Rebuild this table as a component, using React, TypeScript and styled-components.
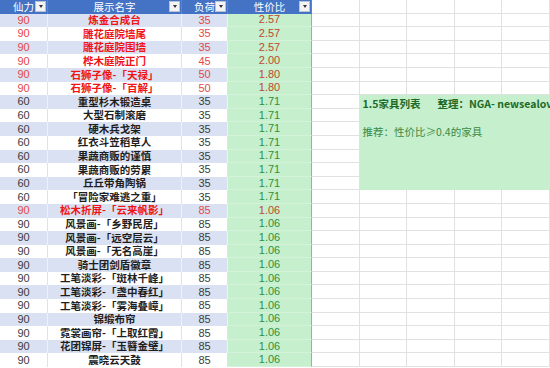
import styled, { createGlobalStyle } from "styled-components";

const GlobalStyle = createGlobalStyle`
  html, body {
    margin: 0;
    padding: 0;
    background: #ffffff;
    overflow: hidden;
  }
`;

type Item = {
  power: number;
  name: string;
  load: number;
  ratio: string;
  hot?: boolean;
};

const items: Item[] = [
  { power: 90, name: "炼金合成台", load: 35, ratio: "2.57", hot: true },
  { power: 90, name: "雕花庭院墙尾", load: 35, ratio: "2.57", hot: true },
  { power: 90, name: "雕花庭院围墙", load: 35, ratio: "2.57", hot: true },
  { power: 90, name: "桦木庭院正门", load: 45, ratio: "2.00", hot: true },
  { power: 90, name: "石狮子像-「天禄」", load: 50, ratio: "1.80", hot: true },
  { power: 90, name: "石狮子像-「百解」", load: 50, ratio: "1.80", hot: true },
  { power: 60, name: "重型杉木锻造桌", load: 35, ratio: "1.71" },
  { power: 60, name: "大型石制滚磨", load: 35, ratio: "1.71" },
  { power: 60, name: "硬木兵戈架", load: 35, ratio: "1.71" },
  { power: 60, name: "红衣斗笠稻草人", load: 35, ratio: "1.71" },
  { power: 60, name: "果蔬商贩的谨慎", load: 35, ratio: "1.71" },
  { power: 60, name: "果蔬商贩的劳累", load: 35, ratio: "1.71" },
  { power: 60, name: "丘丘带角陶锅", load: 35, ratio: "1.71" },
  { power: 60, name: "「冒险家难逃之重」", load: 35, ratio: "1.71" },
  { power: 90, name: "松木折屏-「云来帆影」", load: 85, ratio: "1.06", hot: true },
  { power: 90, name: "风景画-「乡野民居」", load: 85, ratio: "1.06" },
  { power: 90, name: "风景画-「远空层云」", load: 85, ratio: "1.06" },
  { power: 90, name: "风景画-「无名高崖」", load: 85, ratio: "1.06" },
  { power: 90, name: "骑士团剑盾徽章", load: 85, ratio: "1.06" },
  { power: 90, name: "工笔淡彩-「斑林千峰」", load: 85, ratio: "1.06" },
  { power: 90, name: "工笔淡彩-「盏中春红」", load: 85, ratio: "1.06" },
  { power: 90, name: "工笔淡彩-「雾海叠嶂」", load: 85, ratio: "1.06" },
  { power: 90, name: "锦缎布帘", load: 85, ratio: "1.06" },
  { power: 90, name: "霓裳画帘-「上取红霞」", load: 85, ratio: "1.06" },
  { power: 90, name: "花团锦屏-「玉簪金璧」", load: 85, ratio: "1.06" },
  { power: 90, name: "震晓云天鼓", load: 85, ratio: "1.06" },
];

const ROW = "13.6px";
const ROWS = items.length + 1;

const Sheet = styled.div`
  display: flex;
  width: 550px;
  height: 368px;
  overflow: hidden;
  font-family: "Liberation Sans", "Noto Sans CJK SC", sans-serif;
  font-size: 10.5px;
`;

const Table = styled.div`
  display: grid;
  grid-template-columns: 48px 134px 46px 84px;
  grid-auto-rows: ${ROW};
  flex: none;
`;

const HeadCell = styled.div`
  position: relative;
  display: flex;
  align-items: center;
  justify-content: center;
  background: #4472c4;
  color: #ffffff;
  font-family: "Noto Sans CJK SC", sans-serif;
  font-size: 10.5px;
  line-height: 1;
  border-right: 1px solid #5b84cc;
  box-sizing: border-box;
`;

const Filter = styled.span`
  position: absolute;
  right: 1px;
  top: 1px;
  width: 11px;
  height: 11px;
  box-sizing: border-box;
  background: #f4f4f4;
  border: 1px solid #b9c3d3;
  display: flex;
  align-items: center;
  justify-content: center;

  &::after {
    content: "";
    border-left: 2.5px solid transparent;
    border-right: 2.5px solid transparent;
    border-top: 3px solid #333333;
  }
`;

const Cell = styled.div<{ $band: boolean; $hot?: boolean; $bold?: boolean }>`
  display: flex;
  align-items: center;
  justify-content: center;
  white-space: nowrap;
  line-height: 1;
  box-sizing: border-box;
  background: ${(p) => (p.$band ? "#d9e1f2" : "#ffffff")};
  border-right: 1px solid ${(p) => (p.$band ? "#eef1f8" : "#e2e2e2")};
  color: ${(p) =>
    p.$hot ? (p.$bold ? "#f01414" : "#e54848") : p.$bold ? "#1e1e1e" : "#3c3c3c"};
  font-family: ${(p) =>
    p.$bold ? `"Noto Sans CJK SC", sans-serif` : `"Liberation Sans", "Noto Sans CJK SC", sans-serif`};
  font-weight: ${(p) => (p.$bold ? 700 : 400)};
  font-size: ${(p) => (p.$bold ? "10.5px" : "11px")};
`;

const RatioCell = styled.div<{ $hot?: boolean }>`
  display: flex;
  align-items: center;
  justify-content: center;
  line-height: 1;
  box-sizing: border-box;
  background: #c6efce;
  border-right: 1px solid #8ea9db;
  border-bottom: 1px solid #d4f1da;
  color: ${(p) => (p.$hot ? "#c0492e" : "#32903a")};
  font-size: 11px;
`;

const Side = styled.div`
  flex: 1;
  display: grid;
  grid-template-columns: repeat(5, 1fr);
  grid-template-rows: repeat(${ROWS}, ${ROW});
`;

const Blank = styled.div`
  box-sizing: border-box;
  border-right: 1px solid #e1e1e1;
  border-bottom: 1px solid #e1e1e1;
`;

const Note = styled.div`
  grid-column: 2 / 6;
  grid-row: 8 / 15;
  background: #c6efce;
  padding: 2px 0 0 3px;
  font-family: "Noto Sans CJK SC", sans-serif;
  font-size: 10.5px;
  line-height: 14px;
  white-space: nowrap;
  overflow: hidden;
`;

const Title = styled.div`
  display: flex;
  gap: 17px;
  color: #1d6a27;
  font-weight: 700;
`;

const Hint = styled.div`
  margin-top: 14px;
  color: #3b8a43;
`;

const headers = ["仙力", "展示名字", "负荷", "性价比"];

export default function App() {
  const blanks = Array.from({ length: ROWS * 5 - 7 * 4 });
  return (
    <>
      <GlobalStyle />
      <Sheet>
        <Table>
          {headers.map((h) => (
            <HeadCell key={h}>
              {h}
              <Filter />
            </HeadCell>
          ))}
          {items.map((it, i) => {
            const band = i % 2 === 0;
            return [
              <Cell key={`p${i}`} $band={band} $hot={it.hot}>
                {it.power}
              </Cell>,
              <Cell key={`n${i}`} $band={band} $hot={it.hot} $bold>
                {it.name}
              </Cell>,
              <Cell key={`l${i}`} $band={band} $hot={it.hot}>
                {it.load}
              </Cell>,
              <RatioCell key={`r${i}`} $hot={it.hot}>
                {it.ratio}
              </RatioCell>,
            ];
          })}
        </Table>
        <Side>
          <Note>
            <Title>
              <span>1.5家具列表</span>
              <span>整理：NGA- newsealove</span>
            </Title>
            <Hint>推荐：性价比≥0.4的家具</Hint>
          </Note>
          {blanks.map((_, i) => (
            <Blank key={i} />
          ))}
        </Side>
      </Sheet>
    </>
  );
}
